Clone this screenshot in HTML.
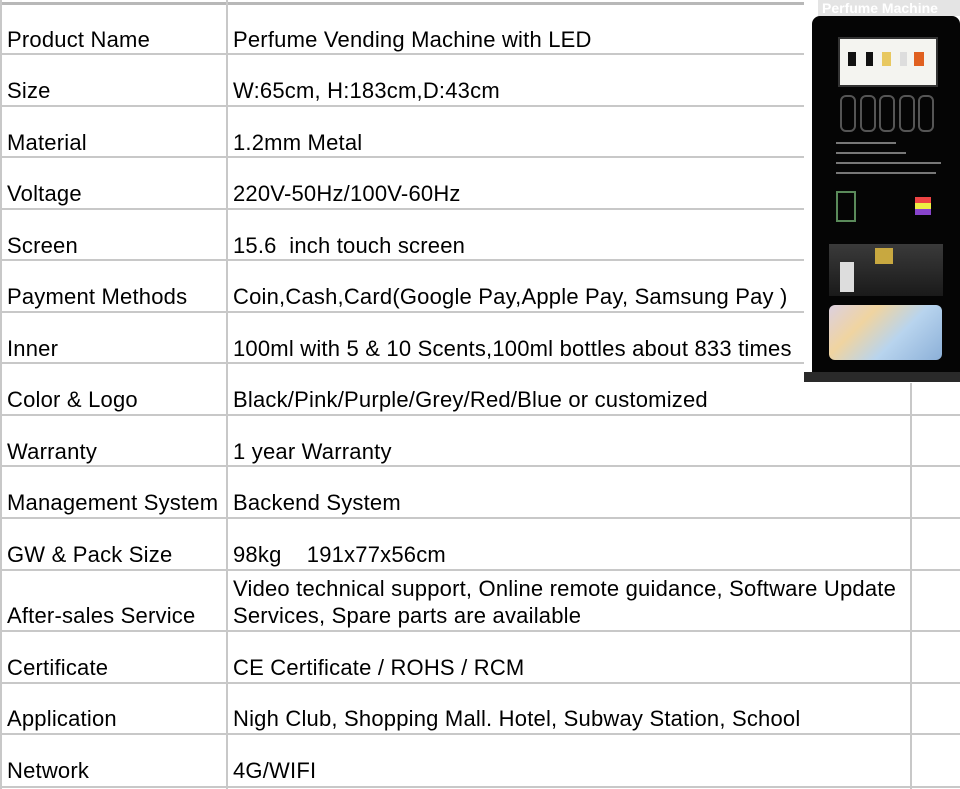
<!DOCTYPE html>
<html><head><style>
body{margin:0;width:960px;height:789px;background:#fff;position:relative;overflow:hidden;font-family:"Liberation Sans",Arial,sans-serif;color:#000}
.h{position:absolute;left:0;width:960px;height:2px;background:#c8c8c8}
.v{position:absolute;top:0;height:789px;width:2px;background:#c8c8c8}
.t{position:absolute;font-size:22px;line-height:24px;white-space:nowrap;letter-spacing:0.2px}
.m{position:absolute;background:#050505}
</style></head><body>
<div class="h" style="top:2px;height:3px;background:#b8b8b8"></div>
<div class="h" style="top:53px"></div><div class="h" style="top:105px"></div><div class="h" style="top:156px"></div>
<div class="h" style="top:208px"></div><div class="h" style="top:259px"></div><div class="h" style="top:311px"></div>
<div class="h" style="top:362px"></div><div class="h" style="top:414px"></div><div class="h" style="top:465px"></div>
<div class="h" style="top:517px"></div><div class="h" style="top:569px"></div><div class="h" style="top:630px"></div>
<div class="h" style="top:682px"></div><div class="h" style="top:733px"></div><div class="h" style="top:786px"></div>
<div class="v" style="left:0"></div><div class="v" style="left:226px"></div><div class="v" style="left:910px"></div>

<div class="t" style="left:7px;top:28px">Product Name</div><div class="t" style="left:233px;top:28px">Perfume Vending Machine with LED</div>
<div class="t" style="left:7px;top:79px">Size</div><div class="t" style="left:233px;top:79px">W:65cm, H:183cm,D:43cm</div>
<div class="t" style="left:7px;top:131px">Material</div><div class="t" style="left:233px;top:131px">1.2mm Metal</div>
<div class="t" style="left:7px;top:182px">Voltage</div><div class="t" style="left:233px;top:182px">220V-50Hz/100V-60Hz</div>
<div class="t" style="left:7px;top:234px">Screen</div><div class="t" style="left:233px;top:234px">15.6&nbsp; inch touch screen</div>
<div class="t" style="left:7px;top:285px">Payment Methods</div><div class="t" style="left:233px;top:285px">Coin,Cash,Card(Google Pay,Apple Pay, Samsung Pay )</div>
<div class="t" style="left:7px;top:337px">Inner</div><div class="t" style="left:233px;top:337px">100ml with 5 &amp; 10 Scents,100ml bottles about 833 times</div>
<div class="t" style="left:7px;top:388px">Color &amp; Logo</div><div class="t" style="left:233px;top:388px">Black/Pink/Purple/Grey/Red/Blue or customized</div>
<div class="t" style="left:7px;top:440px">Warranty</div><div class="t" style="left:233px;top:440px">1 year Warranty</div>
<div class="t" style="left:7px;top:491px">Management System</div><div class="t" style="left:233px;top:491px">Backend System</div>
<div class="t" style="left:7px;top:543px">GW &amp; Pack Size</div><div class="t" style="left:233px;top:543px">98kg&nbsp;&nbsp;&nbsp; 191x77x56cm</div>
<div class="t" style="left:7px;top:604px">After-sales Service</div><div class="t" style="left:233px;top:577px">Video technical support, Online remote guidance, Software Update</div><div class="t" style="left:233px;top:604px">Services, Spare parts are available</div>
<div class="t" style="left:7px;top:656px">Certificate</div><div class="t" style="left:233px;top:656px">CE Certificate / ROHS / RCM</div>
<div class="t" style="left:7px;top:707px">Application</div><div class="t" style="left:233px;top:707px">Nigh Club, Shopping Mall. Hotel, Subway Station, School</div>
<div class="t" style="left:7px;top:759px">Network</div><div class="t" style="left:233px;top:759px">4G/WIFI</div>

<!-- machine image -->
<div style="position:absolute;left:804px;top:0;width:156px;height:383px;background:#fff"></div>
<div style="position:absolute;left:818px;top:0;width:142px;height:16px;background:#e4e4e4;color:#fff;font-size:14px;line-height:16px;font-weight:bold;padding-left:4px;overflow:hidden">Perfume Machine</div>
<div class="m" style="left:812px;top:16px;width:148px;height:356px;border-radius:8px 8px 0 0"></div>
<div class="m" style="left:804px;top:372px;width:156px;height:10px;background:#2a2a2a"></div>
<div style="position:absolute;left:838px;top:37px;width:96px;height:46px;background:#f4f4f0;border:2px solid #333"></div>
<div style="position:absolute;left:848px;top:52px;width:8px;height:14px;background:#111"></div>
<div style="position:absolute;left:866px;top:52px;width:7px;height:14px;background:#111"></div>
<div style="position:absolute;left:882px;top:52px;width:9px;height:14px;background:#e8c860"></div>
<div style="position:absolute;left:900px;top:52px;width:7px;height:14px;background:#ddd"></div>
<div style="position:absolute;left:914px;top:52px;width:10px;height:14px;background:#e06020"></div>
<div style="position:absolute;left:840px;top:95px;width:12px;height:33px;border:2px solid #555;border-radius:6px"></div>
<div style="position:absolute;left:860px;top:95px;width:12px;height:33px;border:2px solid #555;border-radius:6px"></div>
<div style="position:absolute;left:879px;top:95px;width:12px;height:33px;border:2px solid #555;border-radius:6px"></div>
<div style="position:absolute;left:899px;top:95px;width:12px;height:33px;border:2px solid #555;border-radius:6px"></div>
<div style="position:absolute;left:918px;top:95px;width:12px;height:33px;border:2px solid #555;border-radius:6px"></div>
<div style="position:absolute;left:836px;top:142px;width:60px;height:2px;background:#777"></div>
<div style="position:absolute;left:836px;top:152px;width:70px;height:2px;background:#777"></div>
<div style="position:absolute;left:836px;top:162px;width:105px;height:2px;background:#777"></div>
<div style="position:absolute;left:836px;top:172px;width:100px;height:2px;background:#777"></div>
<div style="position:absolute;left:836px;top:191px;width:16px;height:27px;border:2px solid #5a8a5a"></div>
<div style="position:absolute;left:915px;top:197px;width:16px;height:18px;background:linear-gradient(#e44 0 33%,#ee4 33% 66%,#84c 66%)"></div>
<div style="position:absolute;left:829px;top:244px;width:114px;height:52px;background:linear-gradient(#3a3a3a,#1a1a1a)"></div>
<div style="position:absolute;left:840px;top:262px;width:14px;height:30px;background:#ddd"></div>
<div style="position:absolute;left:875px;top:248px;width:18px;height:16px;background:#c8a840"></div>
<div style="position:absolute;left:829px;top:305px;width:113px;height:55px;border-radius:6px;background:linear-gradient(135deg,#dcd0e0,#f0d4a0 30%,#b8d4ee 60%,#8cb0d8)"></div>
</body></html>
